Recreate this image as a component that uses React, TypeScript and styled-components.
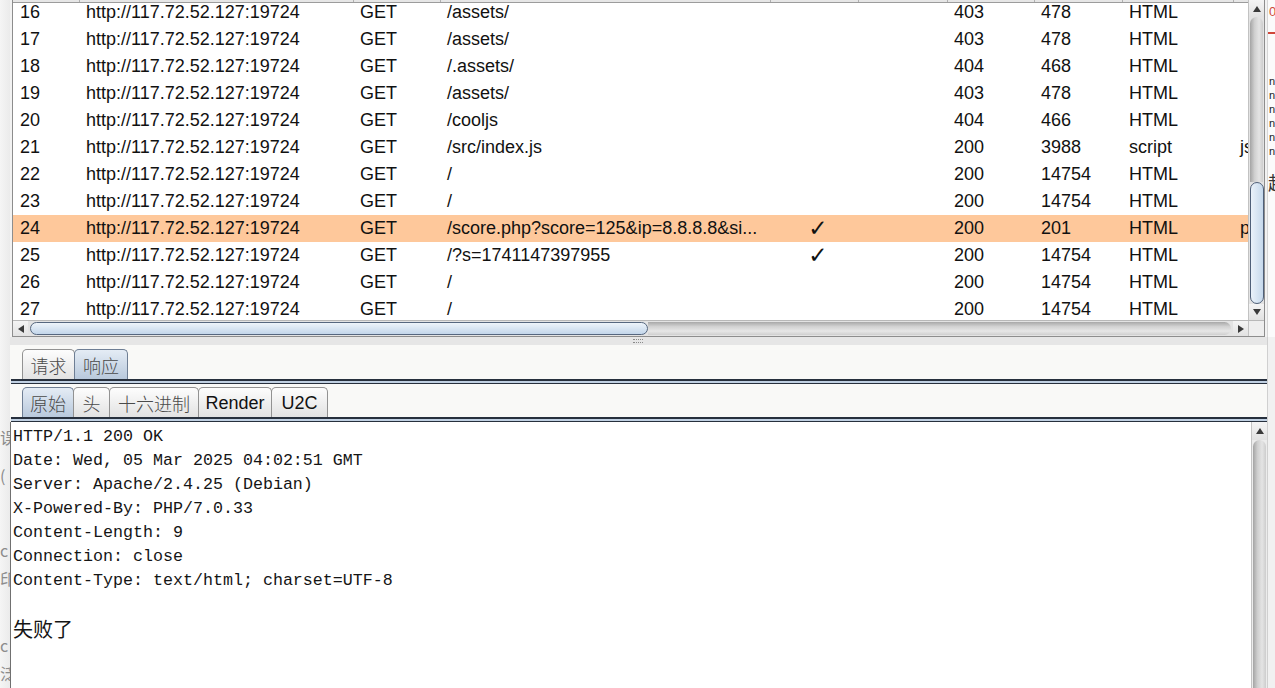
import styled, { createGlobalStyle } from "styled-components";

const GlobalStyle = createGlobalStyle`
  html, body {
    margin: 0;
    padding: 0;
    overflow: hidden;
    background: #f2f2f2;
  }
`;

// column widths of the proxy history table
const COLS = "67px 274px 87px 330px 88px 89px 87px 88px 111px 80px";

const Screen = styled.div`
  display: flex;
  width: 1275px;
  height: 688px;
  overflow: hidden;
  font-family: "Liberation Sans", Arial, sans-serif;
`;

/* ---------- window fragments at the sides ---------- */

const LeftEdge = styled.div`
  width: 10px;
  flex: none;
  display: flex;
  flex-direction: column;
  overflow: hidden;
  background: linear-gradient(to right, #f5f5f5, #ebebeb);
`;

const EdgeGlyph = styled.div<{ $gap: number }>`
  margin-top: ${(p) => p.$gap}px;
  height: 16px;
  line-height: 16px;
  font-family: "Noto Sans CJK SC", "Liberation Sans", sans-serif;
  font-size: 16px;
  color: #8c8c8c;
  white-space: nowrap;
`;

const RightEdge = styled.div`
  width: 8px;
  flex: none;
  display: flex;
  flex-direction: column;
  overflow: hidden;
`;

const RightTop = styled.div`
  height: 337px;
  flex: none;
  display: flex;
  flex-direction: column;
  background: #fbfbfb;
  border-left: 1px solid #d6d6d6;
`;

const RedZero = styled.div`
  margin-top: 4px;
  height: 16px;
  line-height: 16px;
  font-size: 13px;
  color: #d04a3a;
  padding-left: 1px;
`;

const RedRule = styled.div`
  margin-top: 12px;
  height: 2px;
  background: #d0463a;
`;

const TinyLines = styled.div`
  margin-top: 40px;
  font-size: 11px;
  line-height: 14px;
  color: #222;
  padding-left: 1px;
  white-space: pre;
`;

const BigGlyph = styled.div`
  margin-top: 14px;
  font-family: "Noto Sans CJK SC", sans-serif;
  font-size: 18px;
  line-height: 20px;
  color: #333;
  white-space: nowrap;
`;

const RightBottom = styled.div`
  flex: 1;
  background: #f1f1f1;
  border-left: 1px solid #d0d0d0;
`;

/* ---------- center column ---------- */

const Center = styled.div`
  width: 1257px;
  flex: none;
  display: flex;
  flex-direction: column;
`;

const TablePane = styled.div`
  margin-left: 2px;
  width: 1253px;
  height: 337px;
  flex: none;
  box-sizing: border-box;
  border: 1px solid #8d8d8d;
  border-top: none;
  background: #fff;
  display: flex;
  flex-direction: column;
`;

const TableMain = styled.div`
  flex: 1;
  min-height: 0;
  display: flex;
`;

const Viewport = styled.div`
  flex: 1;
  min-width: 0;
  display: flex;
  flex-direction: column;
  overflow: hidden;
`;

const HeaderStrip = styled.div`
  flex: none;
  display: grid;
  grid-template-columns: ${COLS};
  height: 3px;
  box-sizing: border-box;
  border-bottom: 1px solid #9c9c9c;
  background: #e6e6e6;
`;

const HeaderCell = styled.div`
  border-right: 1px solid #b0b0b0;
`;

const RowsClip = styled.div`
  flex: 1;
  overflow: hidden;
`;

const Rows = styled.div`
  margin-top: -4px;
`;

const Row = styled.div<{ $hl?: boolean }>`
  display: grid;
  grid-template-columns: ${COLS};
  height: 27px;
  align-items: center;
  background: ${(p) => (p.$hl ? "#fec89b" : "#fff")};
`;

const Cell = styled.div<{ $center?: boolean; $first?: boolean }>`
  padding-left: ${(p) => (p.$center ? 0 : p.$first ? 7 : 6)}px;
  text-align: ${(p) => (p.$center ? "center" : "left")};
  font-size: 18px;
  color: #111;
  white-space: nowrap;
  overflow: hidden;
`;

const Check = styled.span`
  font-family: "DejaVu Sans", sans-serif;
  font-size: 23px;
  line-height: 27px;
  font-weight: 700;
  color: #111;
  padding-left: 6px;
`;

/* ---------- scroll bars ---------- */

const VScroll = styled.div`
  width: 15px;
  flex: none;
  display: flex;
  flex-direction: column;
  background: #e3e3e3;
  border-left: 1px solid #c2c2c2;
`;

const HScroll = styled.div`
  height: 15px;
  flex: none;
  display: flex;
  background: #e3e3e3;
  border-top: 1px solid #b8b8b8;
`;

const HBar = styled.div`
  flex: 1;
  display: flex;
  align-items: center;
`;

const Corner = styled.div`
  width: 15px;
  border-left: 1px solid #c2c2c2;
  background: #eeeeee;
`;

type Dir = "up" | "down" | "left" | "right";

const Arrow = styled.div<{ $dir: Dir; $len: number }>`
  flex: none;
  ${(p) =>
    p.$dir === "up" || p.$dir === "down"
      ? `height: ${p.$len}px; width: 100%;`
      : `width: ${p.$len}px; height: 100%;`}
  display: flex;
  align-items: center;
  justify-content: center;
  background: linear-gradient(#f4f4f4, #e2e2e2);
  &::before {
    content: "";
    width: 0;
    height: 0;
    ${(p) =>
      p.$dir === "up"
        ? "border-left: 4px solid transparent; border-right: 4px solid transparent; border-bottom: 6px solid #3a3a3a;"
        : p.$dir === "down"
        ? "border-left: 4px solid transparent; border-right: 4px solid transparent; border-top: 6px solid #3a3a3a;"
        : p.$dir === "left"
        ? "border-top: 4px solid transparent; border-bottom: 4px solid transparent; border-right: 6px solid #3a3a3a;"
        : "border-top: 4px solid transparent; border-bottom: 4px solid transparent; border-left: 6px solid #3a3a3a;"}
  }
`;

const VTrack = styled.div<{ $grow?: boolean }>`
  flex: ${(p) => (p.$grow ? 1 : "none")};
  margin: 0 1px;
  border-radius: 8px 8px 0 0;
  background: linear-gradient(to right, #a4a4a4, #cfcfcf 35%, #e4e4e4 70%, #cdcdcd);
`;

const VThumb = styled.div<{ $len: number }>`
  height: ${(p) => p.$len}px;
  flex: none;
  margin: 0 0 0 1px;
  box-sizing: border-box;
  border: 1px solid #4f6079;
  border-radius: 8px;
  background: linear-gradient(to right, #eaf2fa, #c6d9ec);
`;

const HThumb = styled.div<{ $len: number }>`
  width: ${(p) => p.$len}px;
  height: 13px;
  flex: none;
  margin-left: 2px;
  box-sizing: border-box;
  border: 1px solid #56677f;
  border-radius: 8px;
  background: linear-gradient(#eef4fa, #c3d6ea);
`;

const HTrack = styled.div`
  flex: 1;
  height: 13px;
  margin-right: 2px;
  border-radius: 0 8px 8px 0;
  background: linear-gradient(#a8a8a8, #d2d2d2 35%, #e6e6e6 70%, #cfcfcf);
`;

/* ---------- splitter and tabs ---------- */

const Splitter = styled.div`
  height: 8px;
  flex: none;
  display: flex;
  align-items: center;
  justify-content: center;
  background: #e6e6e6;
`;

const Grip = styled.div`
  width: 10px;
  height: 2px;
  border-top: 1px dotted #8a8a8a;
  border-bottom: 1px dotted #8a8a8a;
  margin-left: -2px;
`;

const TabBar = styled.div<{ $top: number }>`
  flex: none;
  display: flex;
  align-items: flex-end;
  padding: ${(p) => p.$top}px 0 0 12px;
  background: #f9f9f7;
`;

const TabLine = styled.div`
  flex: none;
  height: 5px;
  box-sizing: border-box;
  margin-left: 1px;
  border-top: 2px solid #27303d;
  border-bottom: 1px solid #27303d;
  background: #c0d0e2;
`;

const Tab = styled.div<{ $w: number; $active?: boolean; $latin?: boolean }>`
  width: ${(p) => p.$w}px;
  height: 30px;
  box-sizing: border-box;
  margin-right: -1px;
  display: flex;
  align-items: center;
  justify-content: center;
  border: 1px solid ${(p) => (p.$active ? "#6e7e94" : "#929292")};
  border-bottom: none;
  border-radius: 5px 5px 0 0;
  background: ${(p) =>
    p.$active
      ? "linear-gradient(#e4ecf5, #b9c9dc)"
      : "linear-gradient(#fdfdfd, #e2e2e2)"};
  font-family: ${(p) =>
    p.$latin
      ? `"Liberation Sans", Arial, sans-serif`
      : `"Noto Sans CJK SC", "Liberation Sans", sans-serif`};
  font-size: 18px;
  font-weight: ${(p) => (p.$latin ? 400 : 300)};
  color: ${(p) => (p.$latin ? "#111" : "#4a4a4a")};
  padding-top: 1px;
`;

/* ---------- response text ---------- */

const TextArea = styled.div`
  flex: 1;
  min-height: 0;
  display: flex;
  background: #fff;
  border-left: 1px solid #707070;
`;

const TextBody = styled.div`
  flex: 1;
  overflow: hidden;
  padding: 3px 0 0 2px;
  font-family: "Liberation Mono", "Courier New", monospace;
  font-size: 16.66px;
  line-height: 24px;
  color: #151515;
  white-space: pre;
`;

const BodyText = styled.div`
  margin-top: 24px;
  font-family: "Noto Sans CJK SC", sans-serif;
  font-size: 20px;
  line-height: 24px;
  color: #151515;
`;

const TextScroll = styled.div`
  width: 15px;
  flex: none;
  display: flex;
  flex-direction: column;
  background: #ececec;
  border-left: 1px solid #c4c4c4;
`;

type Entry = {
  id: number;
  url: string;
  params?: boolean;
  status: number;
  length: number;
  mime: string;
  ext?: string;
  hl?: boolean;
};

const HOST = "http://117.72.52.127:19724";

const entries: Entry[] = [
  { id: 16, url: "/assets/", status: 403, length: 478, mime: "HTML" },
  { id: 17, url: "/assets/", status: 403, length: 478, mime: "HTML" },
  { id: 18, url: "/.assets/", status: 404, length: 468, mime: "HTML" },
  { id: 19, url: "/assets/", status: 403, length: 478, mime: "HTML" },
  { id: 20, url: "/cooljs", status: 404, length: 466, mime: "HTML" },
  { id: 21, url: "/src/index.js", status: 200, length: 3988, mime: "script", ext: "js" },
  { id: 22, url: "/", status: 200, length: 14754, mime: "HTML" },
  { id: 23, url: "/", status: 200, length: 14754, mime: "HTML" },
  {
    id: 24,
    url: "/score.php?score=125&ip=8.8.8.8&si...",
    params: true,
    status: 200,
    length: 201,
    mime: "HTML",
    ext: "php",
    hl: true,
  },
  { id: 25, url: "/?s=1741147397955", params: true, status: 200, length: 14754, mime: "HTML" },
  { id: 26, url: "/", status: 200, length: 14754, mime: "HTML" },
  { id: 27, url: "/", status: 200, length: 14754, mime: "HTML" },
];

const responseHead = [
  "HTTP/1.1 200 OK",
  "Date: Wed, 05 Mar 2025 04:02:51 GMT",
  "Server: Apache/2.4.25 (Debian)",
  "X-Powered-By: PHP/7.0.33",
  "Content-Length: 9",
  "Connection: close",
  "Content-Type: text/html; charset=UTF-8",
].join("\n");

export default function App() {
  return (
    <Screen>
      <GlobalStyle />
      <LeftEdge>
        <EdgeGlyph $gap={429}>误</EdgeGlyph>
        <EdgeGlyph $gap={22}>(</EdgeGlyph>
        <EdgeGlyph $gap={59}>c</EdgeGlyph>
        <EdgeGlyph $gap={12}>印</EdgeGlyph>
        <EdgeGlyph $gap={51}>c</EdgeGlyph>
        <EdgeGlyph $gap={12}>泛</EdgeGlyph>
      </LeftEdge>

      <Center>
        {/* proxy history table */}
        <TablePane>
          <TableMain>
            <Viewport>
              <HeaderStrip>
                {Array.from({ length: 10 }).map((_, i) => (
                  <HeaderCell key={i} />
                ))}
              </HeaderStrip>
              <RowsClip>
                <Rows>
                  {entries.map((e) => (
                    <Row key={e.id} $hl={e.hl}>
                      <Cell $first>{e.id}</Cell>
                      <Cell>{HOST}</Cell>
                      <Cell>GET</Cell>
                      <Cell>{e.url}</Cell>
                      <Cell $center>{e.params ? <Check>✓</Check> : null}</Cell>
                      <Cell />
                      <Cell>{e.status}</Cell>
                      <Cell>{e.length}</Cell>
                      <Cell>{e.mime}</Cell>
                      <Cell>{e.ext ?? ""}</Cell>
                    </Row>
                  ))}
                </Rows>
              </RowsClip>
            </Viewport>
            <VScroll>
              <Arrow $dir="up" $len={17} />
              <VTrack $grow />
              <VThumb $len={122} />
              <Arrow $dir="down" $len={16} />
            </VScroll>
          </TableMain>
          <HScroll>
            <HBar>
              <Arrow $dir="left" $len={15} />
              <HThumb $len={618} />
              <HTrack />
              <Arrow $dir="right" $len={15} />
            </HBar>
            <Corner />
          </HScroll>
        </TablePane>

        <Splitter>
          <Grip />
        </Splitter>

        {/* request / response tabs */}
        <TabBar $top={4}>
          <Tab $w={53}>请求</Tab>
          <Tab $w={54} $active>
            响应
          </Tab>
        </TabBar>
        <TabLine />

        <TabBar $top={3}>
          <Tab $w={52} $active>
            原始
          </Tab>
          <Tab $w={37}>头</Tab>
          <Tab $w={90}>十六进制</Tab>
          <Tab $w={74} $latin>
            Render
          </Tab>
          <Tab $w={57} $latin>
            U2C
          </Tab>
        </TabBar>
        <TabLine />

        <TextArea>
          <TextBody>
            {responseHead}
            <BodyText>失败了</BodyText>
          </TextBody>
          <TextScroll>
            <Arrow $dir="up" $len={18} />
            <VTrack $grow />
          </TextScroll>
        </TextArea>
      </Center>

      <RightEdge>
        <RightTop>
          <RedZero>0</RedZero>
          <RedRule />
          <TinyLines>{"n\nn\nn\nn\nn\nn"}</TinyLines>
          <BigGlyph>起</BigGlyph>
        </RightTop>
        <RightBottom />
      </RightEdge>
    </Screen>
  );
}
